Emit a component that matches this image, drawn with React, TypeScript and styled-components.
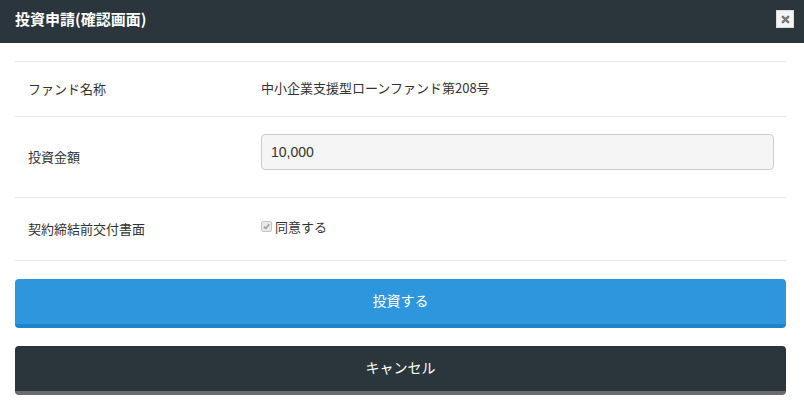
import { createGlobalStyle } from 'styled-components';
import styled from 'styled-components';

const GlobalStyle = createGlobalStyle`
  html, body {
    margin: 0;
    padding: 0;
    background: #ffffff;
  }
  body {
    font-family: "Noto Sans CJK JP", "Liberation Sans", sans-serif;
    color: #333333;
  }
`;

const Modal = styled.div`
  width: 804px;
  height: 401px;
  background: #ffffff;
  overflow: hidden;
`;

const Header = styled.div`
  height: 43px;
  box-sizing: border-box;
  background: #2b353c;
  display: flex;
  align-items: center;
  justify-content: space-between;
  padding: 0 10px 5px 15px;
`;

const Title = styled.h4`
  margin: 0;
  font-size: 15px;
  font-weight: 700;
  line-height: 20px;
  color: #ffffff;
`;

const CloseButton = styled.button`
  width: 18px;
  height: 18px;
  padding: 0;
  border: 1px solid #dcdcdc;
  background: #f4f4f4;
  display: flex;
  align-items: center;
  justify-content: center;
  cursor: pointer;
`;

const Body = styled.div`
  padding: 18px 18px 0 15px;
`;

const Table = styled.table`
  width: 100%;
  table-layout: fixed;
  border-collapse: collapse;
  border-bottom: 1px solid #e8e8e8;
`;

const Row = styled.tr`
  border-top: 1px solid #e8e8e8;
`;

const Label = styled.th<{ $height: number }>`
  width: 246px;
  height: ${p => p.$height}px;
  padding: 0 0 2px 13px;
  text-align: left;
  font-weight: 400;
  font-size: 13px;
  vertical-align: middle;
  box-sizing: border-box;
`;

const Value = styled.td<{ $top?: boolean }>`
  padding: ${p => (p.$top ? '17px 12px 0 0' : '0 12px 3px 0')};
  font-size: 13px;
  vertical-align: ${p => (p.$top ? 'top' : 'middle')};
`;

const AmountInput = styled.input`
  display: block;
  width: 100%;
  height: 36px;
  box-sizing: border-box;
  margin: 0 0 9px;
  padding: 0 9px;
  border: 1px solid #cccccc;
  border-radius: 4px;
  background: #f5f5f5;
  font-family: "Liberation Sans", Arial, sans-serif;
  font-size: 14px;
  color: #333333;
`;

const Agree = styled.label`
  display: inline-flex;
  align-items: center;
  gap: 3px;
  font-size: 13px;
  line-height: 16px;
`;

const Check = styled.span`
  width: 9px;
  height: 9px;
  border: 1px solid #c4c4c4;
  border-radius: 2px;
  background: #e9e9e9;
  display: flex;
  align-items: center;
  justify-content: center;
`;

const Actions = styled.div`
  display: flex;
  flex-direction: column;
  gap: 18px;
  margin-top: 18px;
`;

const ActionButton = styled.button<{ $bg: string; $edge: string }>`
  height: 49px;
  width: 100%;
  border: none;
  border-bottom: 4px solid ${p => p.$edge};
  border-radius: 4px;
  background: ${p => p.$bg};
  color: #ffffff;
  font-family: "Noto Sans CJK JP", sans-serif;
  font-size: 14px;
  padding: 0 0 4px;
  cursor: pointer;
`;

export default function App() {
  return (
    <>
      <GlobalStyle />
      <Modal>
        <Header>
          <Title>投資申請(確認画面)</Title>
          <CloseButton aria-label="閉じる">
            <svg width="9" height="9" viewBox="0 0 10 10">
              <path d="M2 2 L8 8 M8 2 L2 8" stroke="#777777" strokeWidth="2.8" strokeLinecap="round" />
            </svg>
          </CloseButton>
        </Header>
        <Body>
          <Table>
            <tbody>
              <Row>
                <Label $height={55}>ファンド名称</Label>
                <Value>中小企業支援型ローンファンド第208号</Value>
              </Row>
              <Row>
                <Label $height={81}>投資金額</Label>
                <Value $top>
                  <AmountInput defaultValue="10,000" readOnly />
                </Value>
              </Row>
              <Row>
                <Label $height={63}>契約締結前交付書面</Label>
                <Value $top>
                  <Agree>
                    <Check>
                      <svg width="7" height="7" viewBox="0 0 7 7">
                        <path d="M0.8 3.6 L2.8 5.5 L6.2 1.2" fill="none" stroke="#9a9a9a" strokeWidth="1.5" />
                      </svg>
                    </Check>
                    同意する
                  </Agree>
                </Value>
              </Row>
            </tbody>
          </Table>
          <Actions>
            <ActionButton $bg="#2e96dd" $edge="#1c84c8">投資する</ActionButton>
            <ActionButton $bg="#2b353c" $edge="#6b6b6b">キャンセル</ActionButton>
          </Actions>
        </Body>
      </Modal>
    </>
  );
}
